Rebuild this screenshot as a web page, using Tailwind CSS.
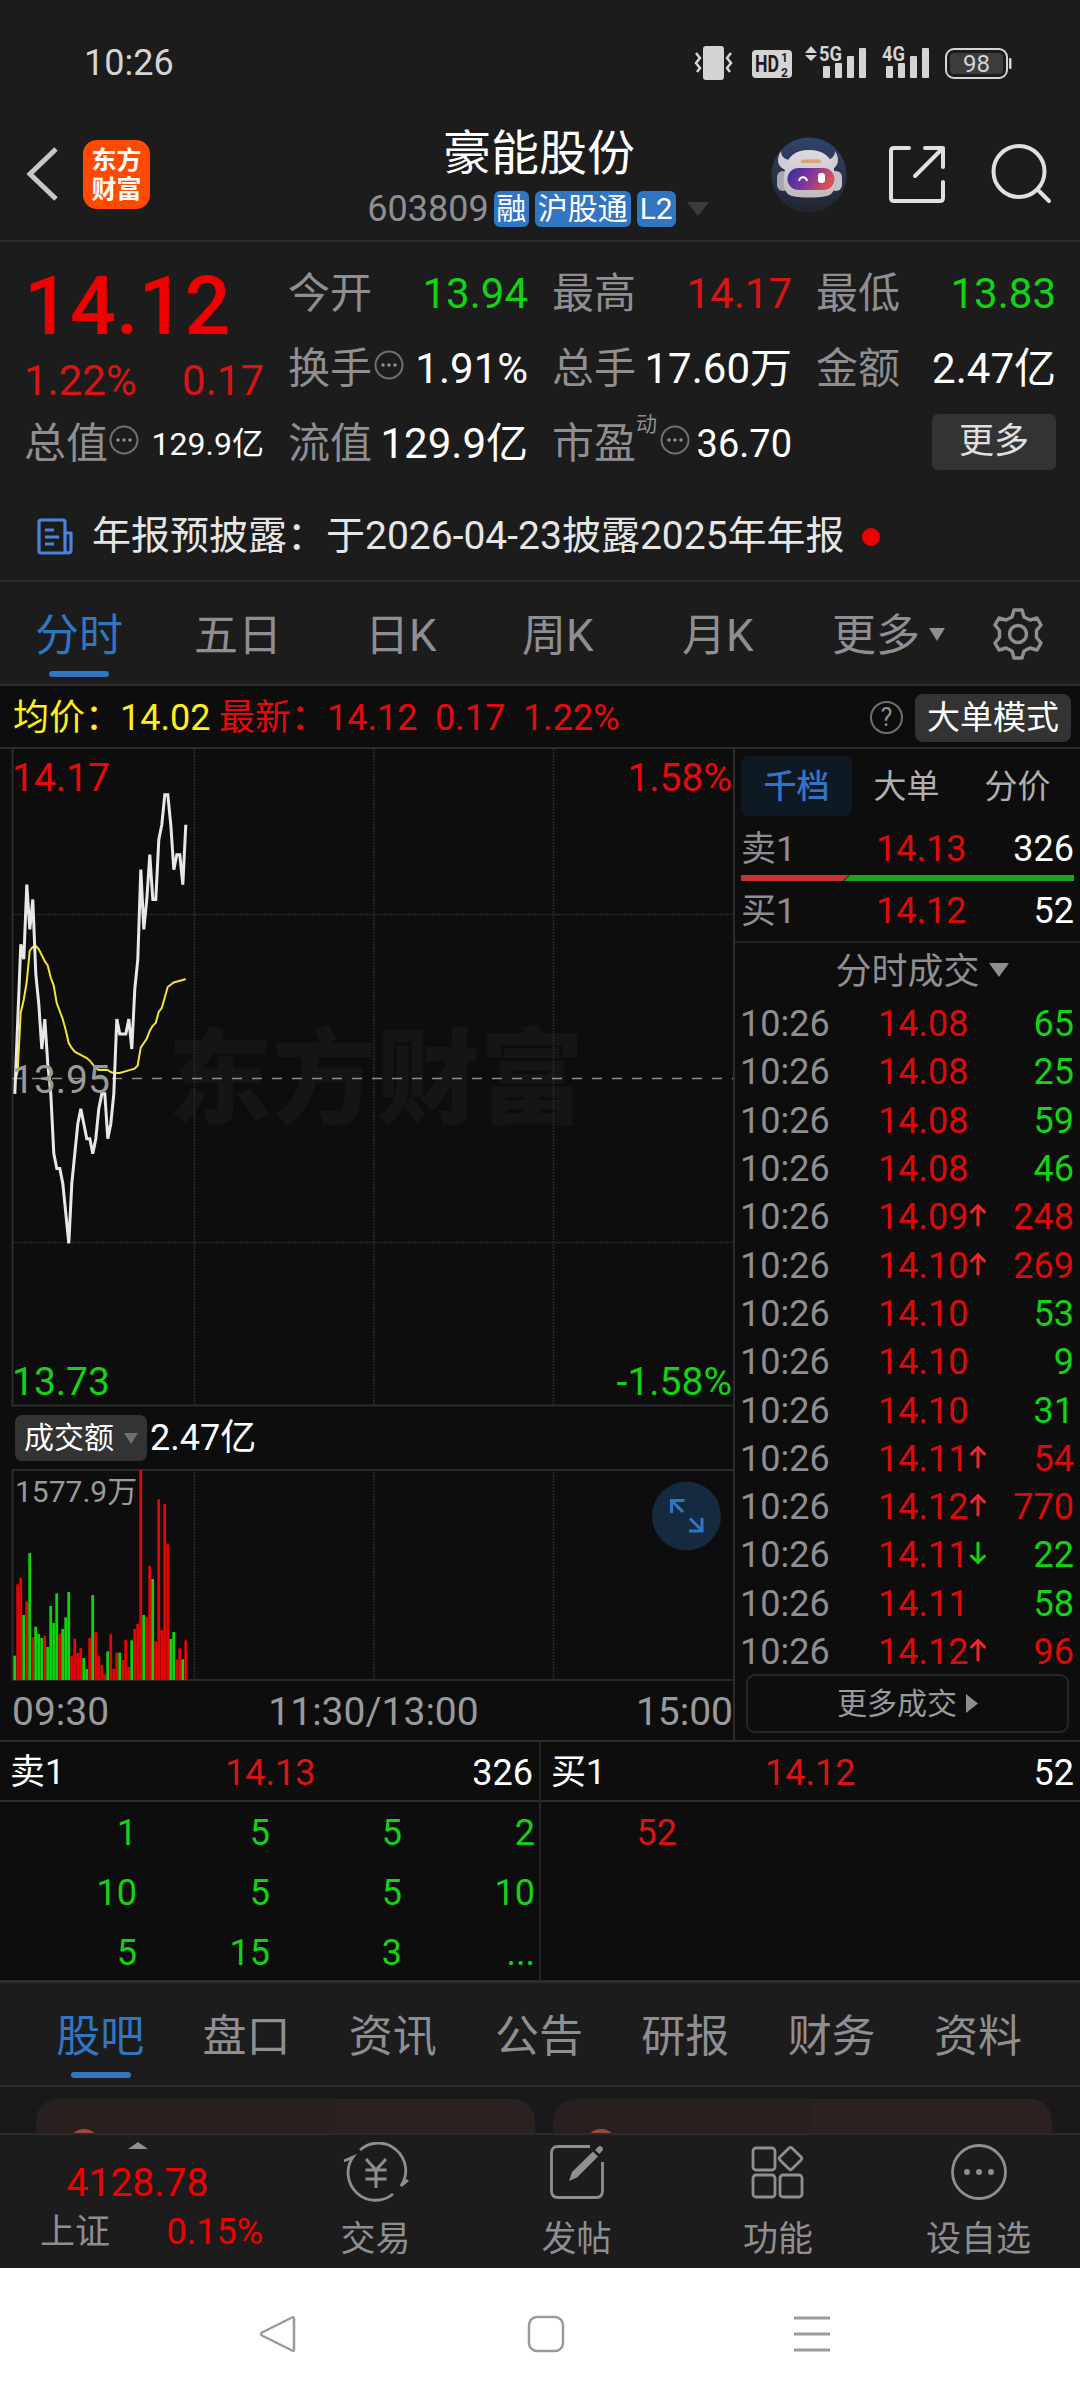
<!DOCTYPE html>
<html lang="zh-CN">
<head>
    <meta charset="UTF-8" />
    <meta name="viewport" content="width=device-width, initial-scale=1.0" />
    <title>豪能股份 603809</title>
    <script src="https://cdn.jsdelivr.net/npm/@tailwindcss/browser@4"></script>
</head>
<body class="w-[1080px] h-[2400px] overflow-hidden flex flex-col bg-[#1c1c1c] text-white font-['Roboto','Noto_Sans_CJK_SC',sans-serif] leading-none whitespace-nowrap">

<!-- 状态栏 -->
<div class="h-[125px] shrink-0 flex items-center justify-between pl-[84px] pr-[67px] text-[#d4d4d4]">
    <span class="text-[36px]">10:26</span>
    <svg class="w-[320px] h-[40px]" viewBox="0 0 320 40" fill="#d4d4d4">
        <rect x="10" y="3" width="21" height="34" rx="3"/>
        <path d="M3 10l4 5-4 5 4 5-3 4M38 10l-4 5 4 5-4 5 3 4" fill="none" stroke="#d4d4d4" stroke-width="2.5"/>
        <rect x="59" y="7" width="40" height="28" rx="4"/>
        <text x="62" y="29" font-family="Roboto" font-weight="700" font-size="23" textLength="24" lengthAdjust="spacingAndGlyphs" fill="#1c1c1c">HD</text>
        <text x="88" y="19" font-family="Roboto" font-weight="700" font-size="12" fill="#1c1c1c">1</text>
        <text x="88" y="33.500" font-family="Roboto" font-weight="700" font-size="12" fill="#1c1c1c">2</text>
        <path d="M112 10l6-7 6 7zM112 12l6 6 6-6z"/>
        <text x="126" y="18" font-family="Roboto" font-weight="700" font-size="21" textLength="23" lengthAdjust="spacingAndGlyphs">5G</text>
        <rect x="130" y="23" width="7" height="12" rx="1"/><rect x="142" y="20" width="7" height="15" rx="1"/><rect x="154" y="13" width="7" height="22" rx="1"/><rect x="166" y="5" width="7" height="30" rx="1"/>
        <text x="189" y="18" font-family="Roboto" font-weight="700" font-size="21" textLength="23" lengthAdjust="spacingAndGlyphs">4G</text>
        <rect x="193" y="23" width="7" height="12" rx="1"/><rect x="205" y="20" width="7" height="15" rx="1"/><rect x="217" y="13" width="7" height="22" rx="1"/><rect x="229" y="5" width="7" height="30" rx="1"/>
        <rect x="253" y="6" width="61" height="29" rx="8" fill="none" stroke="#d4d4d4" stroke-width="2"/>
        <rect x="257" y="10" width="53" height="21" rx="4" fill="#3c3c3c"/>
        <text x="283.500" y="29" font-family="Roboto" font-size="24" text-anchor="middle">98</text>
        <rect x="316" y="15" width="2.500" height="11" rx="1"/>
    </svg>
</div>

<!-- 标题栏 -->
<header class="h-[117px] shrink-0 flex border-b-2 border-[#2c2c2c]">
    <div class="w-[318px] flex items-start pl-[25px]">
        <svg class="mt-[21px] w-[34px] h-[56px]" viewBox="0 0 34 56" fill="none" stroke="#c8c8c8" stroke-width="5"><path d="M31 3L5 28l26 25"/></svg>
        <div class="mt-[15px] ml-6 w-[67px] h-[69px] rounded-[14px] bg-[#ff4a00] flex flex-col items-center justify-center text-[25px] leading-[29px] font-bold"><span>东方</span><span>财富</span></div>
    </div>
    <div class="w-[442px] flex flex-col items-center">
        <h1 class="mt-px text-[48px] leading-[56px]">豪能股份</h1>
        <div class="mt-[9px] flex items-center h-[36px] text-[30px]">
            <span class="text-[36px] text-[#8e8e93] mr-[5px]">603809</span>
            <span class="h-[36px] w-[35px] mr-[6px] rounded-[6px] bg-[#3275c2] flex items-center justify-center">融</span>
            <span class="h-[36px] w-[96px] mr-[6px] rounded-[6px] bg-[#3275c2] flex items-center justify-center">沪股通</span>
            <span class="h-[36px] w-[39px] rounded-[6px] bg-[#3275c2] flex items-center justify-center">L2</span>
            <svg class="ml-[11px] mr-[2px] w-[22px] h-[14px]" viewBox="0 0 22 14"><path d="M0 0h22L11 14z" fill="#3c3c3c"/></svg>
        </div>
    </div>
    <div class="flex-1 flex items-start">
        <svg class="mt-[12px] ml-[11px] w-[76px] h-[76px]" viewBox="0 0 76 76">
            <defs>
                <linearGradient id="sky" x1="0" y1="0" x2="0" y2="1"><stop offset="0" stop-color="#31436b"/><stop offset="1" stop-color="#20242e"/></linearGradient>
                <linearGradient id="visor" x1="0" y1="0" x2="1" y2="0.300"><stop offset="0" stop-color="#2f2f9a"/><stop offset="0.500" stop-color="#7a35a0"/><stop offset="1" stop-color="#d9505a"/></linearGradient>
                <linearGradient id="helmet" x1="0" y1="0" x2="0" y2="1"><stop offset="0" stop-color="#dddbe2"/><stop offset="1" stop-color="#c0b8bc"/></linearGradient>
            </defs>
            <circle cx="38" cy="38" r="37.500" fill="url(#sky)"/>
            <path d="M10 14c-5 8-4 16 5 19l9-10c-8 1-14-2-14-9zM64 14c5 8 4 16-5 19l-9-10c8 1 14-2 14-9z" fill="#cfccd6"/>
            <rect x="6" y="34" width="12" height="20" rx="6" fill="#aaa5ae"/><rect x="59" y="34" width="12" height="20" rx="6" fill="#c4c0c8"/>
            <path d="M38 13c-14 0-22 7-24 19-3 16-1 25 7 27 10 2 25 2 35 0 8-2 10-11 7-27-2-12-11-19-25-19z" fill="url(#helmet)"/>
            <rect x="16.500" y="31" width="47" height="22" rx="11" fill="url(#visor)"/>
            <rect x="30" y="22.500" width="20" height="3.500" rx="1.500" fill="#d9a47c"/>
            <path d="M28 44c1-5 7-5 8 0" fill="none" stroke="#fff" stroke-width="2"/><rect x="47" y="36" width="7" height="10" rx="3" fill="#fff"/>
        </svg>
        <svg class="mt-[19px] ml-[40px] w-[60px] h-[62px]" viewBox="0 0 60 62" fill="none" stroke="#e0e0e0" stroke-width="4" stroke-linecap="round" stroke-linejoin="round"><path d="M22 4H7Q4 4 4 7V54Q4 57 7 57H53Q56 57 56 54V38M38 4H56V23M55 5L28 32"/></svg>
        <svg class="mt-[18px] ml-[43px] w-[62px] h-[62px]" viewBox="0 0 62 62" fill="none" stroke="#e0e0e0" stroke-width="4" stroke-linecap="round"><circle cx="29" cy="28.500" r="25.500"/><path d="M48 47L59 58"/></svg>
    </div>
</header>

<!-- 行情摘要 -->
<section class="h-[340px] shrink-0 flex flex-col border-b-2 border-[#2c2c2c]">
    <div class="h-[239px] pt-[14px] pl-[24px] flex text-[42px]">
        <div class="w-[240px] flex flex-col">
            <div class="h-[98px] pt-[2px] flex items-center text-[81px] font-medium text-[#f00000]">14.12</div>
            <div class="h-[52px] pt-px flex items-center justify-between text-[#d81414]"><span>1.22%</span><span>0.17</span></div>
            <div class="h-[75px] flex items-center">
                <span class="text-[#8e8e93]">总值</span>
                <svg class="w-[30px] h-[30px] ml-px mb-2" viewBox="0 0 30 30"><circle cx="15" cy="15" r="13.500" fill="none" stroke="#707073" stroke-width="2"/><g fill="#8e8e93"><circle cx="9" cy="15" r="1.800"/><circle cx="15" cy="15" r="1.800"/><circle cx="21" cy="15" r="1.800"/></g></svg>
                <span class="ml-auto text-[32px]">129.9亿</span>
            </div>
        </div>
        <div class="w-[240px] ml-[24px] flex flex-col">
            <div class="h-[75px] flex items-center justify-between"><span class="text-[#8e8e93]">今开</span><span class="text-[#14d214]">13.94</span></div>
            <div class="h-[75px] pt-px flex items-center">
                <span class="text-[#8e8e93]">换手</span>
                <svg class="w-[30px] h-[30px] ml-[2px] mb-2" viewBox="0 0 30 30"><circle cx="15" cy="15" r="13.500" fill="none" stroke="#707073" stroke-width="2"/><g fill="#8e8e93"><circle cx="9" cy="15" r="1.800"/><circle cx="15" cy="15" r="1.800"/><circle cx="21" cy="15" r="1.800"/></g></svg>
                <span class="ml-auto">1.91%</span>
            </div>
            <div class="h-[75px] flex items-center justify-between"><span class="text-[#8e8e93]">流值</span><span>129.9亿</span></div>
        </div>
        <div class="w-[240px] ml-[24px] flex flex-col">
            <div class="h-[75px] flex items-center justify-between"><span class="text-[#8e8e93]">最高</span><span class="text-[#d81414]">14.17</span></div>
            <div class="h-[75px] pt-px flex items-center justify-between"><span class="text-[#8e8e93]">总手</span><span>17.60万</span></div>
            <div class="h-[75px] flex items-center">
                <span class="text-[#8e8e93]">市盈</span><span class="text-[21px] text-[#8e8e93] mb-[38px]">动</span>
                <svg class="w-[30px] h-[30px] ml-[3px] mb-2" viewBox="0 0 30 30"><circle cx="15" cy="15" r="13.500" fill="none" stroke="#707073" stroke-width="2"/><g fill="#8e8e93"><circle cx="9" cy="15" r="1.800"/><circle cx="15" cy="15" r="1.800"/><circle cx="21" cy="15" r="1.800"/></g></svg>
                <span class="ml-auto text-[38px]">36.70</span>
            </div>
        </div>
        <div class="w-[240px] ml-[24px] flex flex-col">
            <div class="h-[75px] flex items-center justify-between"><span class="text-[#8e8e93]">最低</span><span class="text-[#14d214]">13.83</span></div>
            <div class="h-[75px] pt-px flex items-center justify-between"><span class="text-[#8e8e93]">金额</span><span>2.47亿</span></div>
            <div class="h-[75px] pb-[4px] flex items-center justify-end"><button class="w-[124px] h-[56px] rounded-[6px] bg-[#333333] text-[#e0e0e0] text-[35px]">更多</button></div>
        </div>
    </div>
    <div class="h-[99px] pt-[12px] flex items-center pl-[37px] text-[39px] text-[#e6e6e6]">
        <svg class="w-[36px] h-[38px] mr-[19px]" viewBox="0 0 36 38" fill="none" stroke="#4a84dc" stroke-width="3.200" stroke-linejoin="round"><path d="M28 35H4Q2 35 2 33V4Q2 2 4 2H26Q28 2 28 4V32Q28 35 31 35Q34 35 34 32V15H28"/><path d="M8 12h9M8 19h14M8 26h9"/></svg>
        <span>年报预披露：于2026-04-23披露2025年年报</span>
        <span class="ml-[17px] w-[18px] h-[18px] rounded-full bg-[#f00000]"></span>
    </div>
</section>

<!-- K线周期 -->
<nav class="h-[104px] shrink-0 flex items-center pl-[35px] pt-[5px] border-b-2 border-[#2c2c2c] text-[44px] text-[#8e8e93]">
    <div class="w-[159px] h-full relative flex items-center text-[#3275c2]">分时<span class="absolute left-[14px] bottom-[7px] w-[60px] h-[6px] rounded-full bg-[#3275c2]"></span></div>
    <span class="w-[171px]">五日</span>
    <span class="w-[157px]">日K</span>
    <span class="w-[160px]">周K</span>
    <span class="w-[150px]">月K</span>
    <span>更多</span>
    <svg class="ml-[9px] mb-[3px] w-[16px] h-[13px]" viewBox="0 0 16 13"><path d="M0 0h16L8 13z" fill="#8e8e93"/></svg>
    <svg class="ml-[47px] mb-[3px] w-[52px] h-[52px]" viewBox="0 0 52 52" fill="none" stroke="#8e8e93" stroke-width="3.500" stroke-linejoin="round"><path d="M22 2h8l2 7 6 3 7-2 4 7-4.500 5.500v7L49 35l-4 7-7-2-6 3-2 7h-8l-2-7-6-3-7 2-4-7 4.500-5.500v-7L3 17l4-7 7 2 6-3z"/><circle cx="26" cy="26" r="8.500"/></svg>
</nav>

<div class="h-[63px] shrink-0 flex items-center pl-[13px] pr-[9px] pt-[2px] bg-[#0d0d0d] border-b-2 border-[#2c2c2c] text-[36px] text-[#e60a0a]">
    <span class="w-[107px] text-[#fff019]">均价：</span>
    <span class="w-[99px] text-[#fff019]">14.02</span>
    <span class="w-[108px]">最新：</span>
    <span class="w-[108px]">14.12</span>
    <span class="w-[88px]">0.17</span>
    <span>1.22%</span>
    <span class="ml-auto w-[33px] h-[33px] rounded-full border-[2.500px] border-[#707073] text-[#8e8e93] text-[25px] flex items-center justify-center">?</span>
    <button class="ml-[12px] w-[156px] h-[48px] rounded-[8px] bg-[#333333] text-white text-[33px]">大单模式</button>
</div>

<!-- 分时图 + 盘口明细 -->
<section class="h-[993px] shrink-0 flex bg-[#0d0d0d] border-b-2 border-[#2c2c2c]">
    <div class="w-[735px] h-full border-r-2 border-[#2c2c2c] flex flex-col">
        <div class="relative h-[658px] text-[39px]">
            <svg class="absolute inset-0 w-[733px] h-[658px]" viewBox="0 0 733 658" fill="none">
                <text x="168" y="367" font-family="Noto Sans CJK SC" font-weight="900" font-size="104" fill="#151515">东方财富</text>
                <path d="M194.500 0V656M374 0V656M553.500 0V656M12 165.500H733M12 493.500H733" stroke="#2b2b2b" stroke-width="1.500" stroke-dasharray="2 1"/>
                <path d="M12.500 0V656.500H733" stroke="#2c2c2c" stroke-width="2"/>
                <path d="M12 329.500H733" stroke="#8c8c8c" stroke-width="1.700" stroke-dasharray="10 10"/>
                <polyline stroke="#f5e532" stroke-width="2" points="15.500,331 17.700,322 20.700,264 23.700,251 26.700,233 29.700,202 32.700,198 35.700,197 38.700,200 44.700,212 47.700,216.500 50.700,228.500 53.700,236.600 56.700,254 62.700,270 65.700,281 68.700,294 71.700,299 74.700,302.700 80.700,305.800 86.700,309 89.700,311.600 95.700,318.800 98.700,321 107.700,321 110.700,323 113.700,324 119.700,324 128.700,321.400 134.700,319.600 137.700,316.500 140.700,298.700 146.700,289.700 149.700,282 152.700,276.800 155.700,274 158.700,263 161.700,259 164.700,248.700 167.700,238 173.700,233.500 182.700,231 185.700,230"/>
                <polyline id="priceLine" stroke="#e8e8e8" stroke-width="3"/>
            </svg>
            <span class="absolute left-[12px] top-[10px] text-[#e60a0a]">14.17</span>
            <span class="absolute right-px top-[10px] text-[#e60a0a]">1.58%</span>
            <span class="absolute left-[12px] top-[312px] text-[#9a9a9a]">13.95</span>
            <span class="absolute left-[12px] top-[614px] text-[#14d214]">13.73</span>
            <span class="absolute right-px top-[614px] text-[#14d214]">-1.58%</span>
        </div>
        <div class="h-[62px] flex items-center pl-[15px] text-[36px]">
            <div class="w-[132px] h-[46px] rounded-[7px] bg-[#333333] flex items-center justify-center gap-[10px] text-[30px]">成交额<svg class="w-[14px] h-[11px]" viewBox="0 0 14 11"><path d="M0 0h14L7 11z" fill="#707070"/></svg></div>
            <span class="ml-[3px]">2.47亿</span>
        </div>
        <div class="relative h-[212px]">
            <svg class="absolute inset-0 w-[733px] h-[212px]" viewBox="0 0 733 212" fill="none">
                <path d="M194.500 0V210M374 0V210M553.500 0V210" stroke="#2b2b2b" stroke-width="1.500" stroke-dasharray="2 1"/>
                <path d="M733 1H12.500V211H733" stroke="#2a2a2a" stroke-width="2"/>
                <g id="volBars"></g>
                <circle cx="686.500" cy="47" r="34.500" fill="#15293f"/>
                <path d="M671.500 44V31.500H684.500M672 32L683 43M690 49.500L702 61.500M689 62H702V49" stroke="#3275c2" stroke-width="3"/>
            </svg>
            <span class="absolute left-[15px] top-[8px] text-[30px] text-[#9a9a9a]">1577.9万</span>
        </div>
        <div class="h-[59px] pl-[12px] pt-[3px] flex items-center justify-between text-[39px] text-[#9a9a9a]"><span>09:30</span><span class="pl-[2px]">11:30/13:00</span><span>15:00</span></div>
    </div>

    <div class="flex-1 flex flex-col text-[36px]">
        <div class="h-[74px] flex items-center pl-[6px] text-[33px] text-[#b0b0b0]">
            <span class="w-[111px] h-[60px] rounded-[8px] bg-[#0f1923] text-[#3275c2] font-medium flex items-center justify-center">千档</span>
            <span class="w-[109px] flex justify-center">大单</span>
            <span class="w-[113px] flex justify-center">分价</span>
        </div>
        <div class="h-[50px] pt-[2px] flex items-center pl-[6px] pr-[6px]"><span class="w-[135px] text-[#8e8e93] text-[35px]">卖1</span><span class="text-[#de0a0a]">14.13</span><span class="ml-auto">326</span></div>
        <svg class="mt-[2px] ml-[6px] w-[333px] h-[6px]" viewBox="0 0 333 6"><path d="M0 0H108L102 6H0z" fill="#c83232"/><path d="M109 0H333V6H103z" fill="#19a519"/></svg>
        <div class="h-[60px] flex items-center pl-[6px] pr-[6px]"><span class="w-[135px] text-[#8e8e93] text-[35px]">买1</span><span class="text-[#de0a0a]">14.12</span><span class="ml-auto">52</span></div>
        <div class="h-[59px] border-t-2 border-[#242424] flex items-center justify-center pl-[29px] text-[#8e8e93]">分时成交<svg class="ml-[9px] mb-[4px] w-[20px] h-[14px]" viewBox="0 0 20 14"><path d="M0 0h20L10 14z" fill="#8e8e93"/></svg></div>
        <div id="ticks" class="flex flex-col pl-[5px] pr-[6px]"></div>
        <button class="ml-[11px] -mt-[2px] w-[323px] h-[59px] rounded-[9px] border-2 border-[#262626] flex items-center justify-center text-[30px] text-[#9a9a9a]">更多成交<svg class="ml-[9px] w-[12px] h-[19px]" viewBox="0 0 12 19"><path d="M0 0L12 9.500L0 19z" fill="#8e8e8e"/></svg></button>
    </div>
</section>

<!-- 委托队列 -->
<section class="h-[241px] shrink-0 flex bg-[#0d0d0d] border-b-3 border-[#2e2e2e] text-[36px]">
    <div class="w-[541px] border-r-2 border-[#242424]">
        <div class="h-[60px] pt-[3px] flex items-center pl-[10px] pr-[6px] border-b-2 border-[#2c2c2c]"><span class="w-[215px] text-[35px]">卖1</span><span class="text-[#d81414]">14.13</span><span class="ml-auto">326</span></div>
        <div class="pt-px grid grid-cols-[137px_133px_132px_133px] auto-rows-[60px] items-center text-right text-[#14d214]">
            <span>1</span><span>5</span><span>5</span><span>2</span>
            <span>10</span><span>5</span><span>5</span><span>10</span>
            <span>5</span><span>15</span><span>3</span><span>...</span>
        </div>
    </div>
    <div class="flex-1">
        <div class="h-[60px] pt-[3px] flex items-center pl-[10px] pr-[6px] border-b-2 border-[#2c2c2c]"><span class="w-[214px] text-[35px]">买1</span><span class="text-[#d81414]">14.12</span><span class="ml-auto">52</span></div>
        <div class="h-[61px] pt-px w-[136px] flex items-center justify-end text-[#d81414]">52</div>
    </div>
</section>

<!-- 资讯标签 -->
<nav class="h-[104px] shrink-0 flex pl-[27px] pt-[5px] border-b-2 border-[#2c2c2c] text-[44px] text-[#8e8e93]">
    <span class="relative w-[146.300px] flex items-center justify-center text-[#3275c2]">股吧<span class="absolute left-[44px] bottom-[7px] w-[60px] h-[6px] rounded-full bg-[#3275c2]"></span></span>
    <span class="w-[146.300px] flex items-center justify-center">盘口</span>
    <span class="w-[146.300px] flex items-center justify-center">资讯</span>
    <span class="w-[146.300px] flex items-center justify-center">公告</span>
    <span class="w-[146.300px] flex items-center justify-center">研报</span>
    <span class="w-[146.300px] flex items-center justify-center">财务</span>
    <span class="w-[146.300px] flex items-center justify-center">资料</span>
</nav>

<div class="h-[46px] shrink-0 flex gap-[18px] px-[36px] pt-[12px] bg-[#19191b] overflow-hidden">
    <div class="w-[499px] h-[80px] shrink-0 rounded-[22px] bg-[linear-gradient(90deg,#28201f_60%,#2c2121_60%)] pl-[32px] pt-[30px]"><div class="w-[32px] h-[32px] rounded-full bg-[#a04440]"></div></div>
    <div class="w-[499px] h-[80px] shrink-0 rounded-[22px] bg-[linear-gradient(90deg,#28201f_52%,#2c2121_52%)] pl-[32px] pt-[30px]"><div class="w-[32px] h-[32px] rounded-full bg-[#a04440]"></div></div>
</div>

<!-- 底部导航 -->
<footer class="h-[135px] shrink-0 flex border-t-2 border-[#2a2a2a] text-[35px] text-[#8e8e93]">
    <div class="w-[275px] flex flex-col items-center pt-[7px]">
        <svg class="w-[20px] h-[7px]" viewBox="0 0 20 7"><path d="M0 7L10 0L20 7z" fill="#8e8e93"/></svg>
        <span class="mt-[15px] text-[39px] text-[#f00000]">4128.78</span>
        <div class="mt-[11px] w-[223px] flex justify-between items-center self-start ml-[40px]"><span>上证</span><span class="text-[36px] text-[#f00000]">0.15%</span></div>
    </div>
    <div class="w-[201px] flex flex-col items-center pt-[7px]">
        <svg class="w-[68px] h-[60px]" viewBox="0 0 68 60" fill="none" stroke="#8e8e93" stroke-width="2.800"><path d="M18 8A27.500 27.500 0 0 1 59 44L66 38M2 19L11 15A27.500 27.500 0 0 0 51 52"/><path d="M24 17L34 28L44 17M23.500 28H44.500M23.500 37H44.500M34 28V46" stroke-width="3"/></svg>
        <span class="mt-[20px]">交易</span>
    </div>
    <div class="w-[201px] flex flex-col items-center pt-[7px]">
        <svg class="w-[60px] h-[60px]" viewBox="0 0 60 60" fill="none" stroke="#8e8e93" stroke-width="2.800"><path d="M43 4.500H11Q4.500 4.500 4.500 11V49Q4.500 55.500 11 55.500H49Q55.500 55.500 55.500 49V20"/><path d="M22 39L25 30L46 9.500L51 14.500L30 35.500zM48 8L51 5Q53 3 55 5Q57 7 55 9L52.500 12z" fill="#8e8e93" stroke="none"/></svg>
        <span class="mt-[20px]">发帖</span>
    </div>
    <div class="w-[202px] flex flex-col items-center pt-[7px]">
        <svg class="w-[60px] h-[60px]" viewBox="0 0 60 60" fill="none" stroke="#8e8e93" stroke-width="2.800" stroke-linejoin="round"><rect x="5" y="6" width="22" height="22" rx="3"/><rect x="5" y="33" width="22" height="22" rx="3"/><rect x="32" y="33" width="22" height="22" rx="3"/><rect x="34" y="8" width="17" height="17" rx="2" transform="rotate(45 42.500 16.500)"/></svg>
        <span class="mt-[20px]">功能</span>
    </div>
    <div class="w-[199px] flex flex-col items-center pt-[7px]">
        <svg class="w-[60px] h-[60px]" viewBox="0 0 60 60"><circle cx="30" cy="30" r="26.500" fill="none" stroke="#8e8e93" stroke-width="2.800"/><g fill="#8e8e93"><circle cx="18" cy="30" r="3"/><circle cx="30" cy="30" r="3"/><circle cx="42" cy="30" r="3"/></g></svg>
        <span class="mt-[20px]">设自选</span>
    </div>
</footer>

<!-- 系统导航键 -->
<div class="flex-1 bg-white flex items-center pl-[259px]">
    <svg class="w-[38px] h-[38px]" viewBox="0 0 38 38" fill="none" stroke="#9a9a9a" stroke-width="2.500" stroke-linejoin="round"><path d="M33 2.500Q35 1.500 35 4V34Q35 36.500 33 35.500L3 20.500Q1 19 3 17.500z"/></svg>
    <svg class="ml-[230px] w-[38px] h-[38px]" viewBox="0 0 38 38" fill="none" stroke="#9a9a9a" stroke-width="2.500"><rect x="2" y="2" width="34" height="34" rx="8"/></svg>
    <svg class="ml-[229px] w-[36px] h-[38px]" viewBox="0 0 36 38" stroke="#9a9a9a" stroke-width="3"><path d="M0 3H36M0 19H36M0 35H36"/></svg>
</div>

<script>
    // 每分钟价格，单位：分（1394 = 13.94）
    const prices = [1394, 1399, 1404, 1403, 1408, 1405, 1407, 1402, 1400, 1397, 1399, 1396, 1394, 1390, 1389, 1389, 1388, 1386, 1384, 1388,
      1390, 1392, 1393, 1392, 1391, 1391, 1390, 1391, 1393, 1394, 1394, 1391, 1392, 1394, 1399, 1398, 1398, 1398, 1399, 1397,
      1401, 1403, 1409, 1405, 1407, 1410, 1407, 1407, 1411, 1412, 1414, 1414, 1412, 1409, 1410, 1410, 1408, 1412];
    document.getElementById('priceLine').setAttribute('points',
      prices.map((p, i) => `${14.8 + i * 3},${(1417 - p) * 14.95 + 1}`).join(' '));

    // 成交额柱：高度 + 涨跌色
    const vols = '73g 287r 306r 195g 235r 381g 128r 160g 138g 126g 132r 99g 222g 171g 260g 138r 153g 188g 264g 73r 124r 81r 96r 66g 33g 126r 255g 144r 72r 45r 17r 86g 137r 33r 82r 82g 60r 120r 39r 119g 153r 168r 630r 195g 190r 342r 303g 116r 542r 150r 528r 408r 123g 144g 62r 95r 62g 119r'.split(' ');
    document.getElementById('volBars').innerHTML = vols.map((v, i) => {
      const h = parseInt(v) / 3;
      return `<rect x="${13.3 + i * 3}" y="${211 - h}" width="2.8" height="${h}" fill="${v.endsWith('r') ? '#e60505' : '#0fd20f'}"/>`;
    }).join('');

    const ticks = [
      ['14.08', '', 65, 0], ['14.08', '', 25, 0], ['14.08', '', 59, 0], ['14.08', '', 46, 0],
      ['14.09', 'up', 248, 1], ['14.10', 'up', 269, 1], ['14.10', '', 53, 0], ['14.10', '', 9, 0], ['14.10', '', 31, 0],
      ['14.11', 'up', 54, 1], ['14.12', 'up', 770, 1], ['14.11', 'down', 22, 0], ['14.11', '', 58, 0], ['14.12', 'up', 96, 1]
    ];
    const arrows = {
      '': '',
      up: '<svg class="w-[18px] h-[24px] mb-[4px]" viewBox="0 0 18 24" fill="none" stroke="#f02828" stroke-width="3" stroke-linecap="round"><path d="M9 22V3M2.500 9L9 2.500L15.500 9"/></svg>',
      down: '<svg class="w-[18px] h-[24px] mb-[4px]" viewBox="0 0 18 24" fill="none" stroke="#14d214" stroke-width="3" stroke-linecap="round"><path d="M9 2V21M2.500 15L9 21.500L15.500 15"/></svg>'
    };
    document.getElementById('ticks').innerHTML = ticks.map(([price, dir, qty, buy]) => `
      <div class="h-[48.300px] flex items-center">
        <span class="w-[138px] text-[#8e8e93]">10:26</span>
        <span class="w-[91px] text-[#de0a0a]">${price}</span>${arrows[dir]}
        <span class="ml-auto ${buy ? 'text-[#de0a0a]' : 'text-[#14d214]'}">${qty}</span>
      </div>`).join('');
</script>
</body>
</html>
